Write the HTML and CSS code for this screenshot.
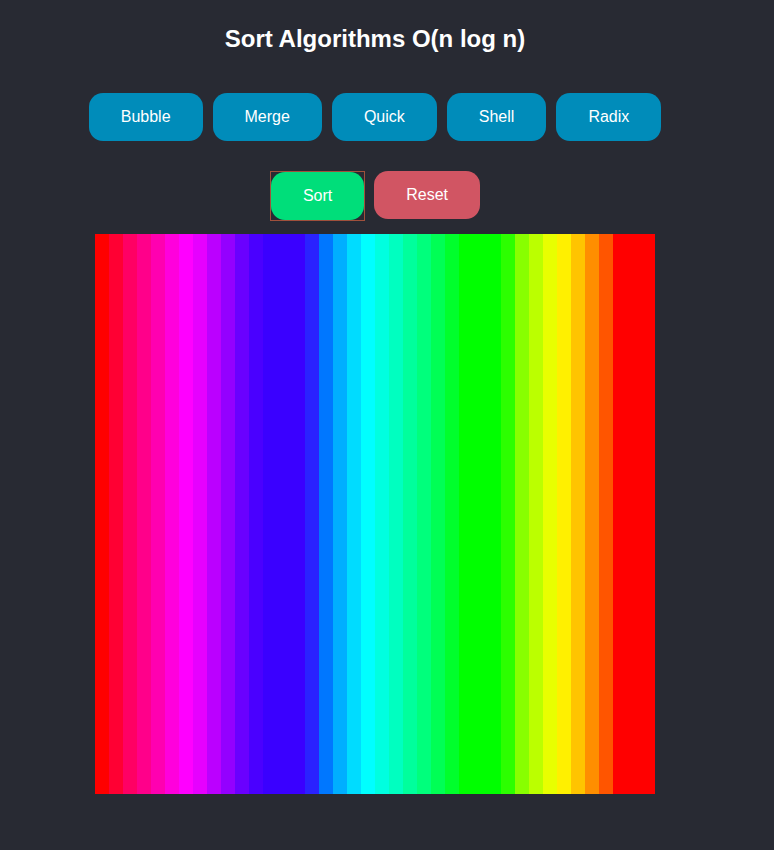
FILE: index.html
```html
<!DOCTYPE html>
<html>
<head>
<meta charset="utf-8">
<link rel="stylesheet" href="styles.css">
</head>
<body>
<div class="app">
  <h1 class="title">Sort Algorithms O(n log n)</h1>
  <div class="row algos">
    <button class="btn blue">Bubble</button>
    <button class="btn blue">Merge</button>
    <button class="btn blue">Quick</button>
    <button class="btn blue">Shell</button>
    <button class="btn blue">Radix</button>
  </div>
  <div class="row actions">
    <span class="focus"><button class="btn green">Sort</button></span>
    <button class="btn red">Reset</button>
  </div>
  <div class="canvas">
    <div class="bar" style="background:#ff0000"></div>
    <div class="bar" style="background:#ff0033"></div>
    <div class="bar" style="background:#ff0064"></div>
    <div class="bar" style="background:#ff008a"></div>
    <div class="bar" style="background:#ff00b0"></div>
    <div class="bar" style="background:#ff00dc"></div>
    <div class="bar" style="background:#ff00ff"></div>
    <div class="bar" style="background:#e600ff"></div>
    <div class="bar" style="background:#bb00ff"></div>
    <div class="bar" style="background:#9400ff"></div>
    <div class="bar" style="background:#6a00ff"></div>
    <div class="bar" style="background:#4a00ff"></div>
    <div class="bar" style="background:#3a00ff"></div>
    <div class="bar" style="background:#3a00ff"></div>
    <div class="bar" style="background:#3a00ff"></div>
    <div class="bar" style="background:#2a22ff"></div>
    <div class="bar" style="background:#0077ff"></div>
    <div class="bar" style="background:#00aeff"></div>
    <div class="bar" style="background:#00dcff"></div>
    <div class="bar" style="background:#00ffff"></div>
    <div class="bar" style="background:#00ffe0"></div>
    <div class="bar" style="background:#00ffc0"></div>
    <div class="bar" style="background:#00ff9c"></div>
    <div class="bar" style="background:#00ff7c"></div>
    <div class="bar" style="background:#00ff55"></div>
    <div class="bar" style="background:#00ff2c"></div>
    <div class="bar" style="background:#00ff00"></div>
    <div class="bar" style="background:#00ff00"></div>
    <div class="bar" style="background:#00ff00"></div>
    <div class="bar" style="background:#2cff00"></div>
    <div class="bar" style="background:#88ff00"></div>
    <div class="bar" style="background:#bbff00"></div>
    <div class="bar" style="background:#e8ff00"></div>
    <div class="bar" style="background:#fff000"></div>
    <div class="bar" style="background:#ffc400"></div>
    <div class="bar" style="background:#ff8e00"></div>
    <div class="bar" style="background:#ff5500"></div>
    <div class="bar" style="background:#ff0000"></div>
    <div class="bar" style="background:#ff0000"></div>
    <div class="bar" style="background:#ff0000"></div>
  </div>
</div>
</body>
</html>
```
FILE: styles.css
```css
html, body {
  margin: 0;
  padding: 0;
  background: #282a33;
  font-family: "Liberation Sans", Arial, sans-serif;
}

.app {
  width: 750px;
  display: flex;
  flex-direction: column;
  align-items: center;
  padding-top: 25px;
}

.title {
  margin: 0;
  font-size: 24px;
  line-height: 28px;
  font-weight: bold;
  color: #ffffff;
}

.row {
  display: flex;
  gap: 10px;
  align-items: center;
}

.algos {
  margin-top: 40px;
}

.actions {
  margin-top: 30px;
  gap: 9px;
  align-items: flex-start;
}

.btn {
  border: none;
  border-radius: 14px;
  height: 48px;
  padding: 0 32px;
  font-family: "Liberation Sans", Arial, sans-serif;
  font-size: 16px;
  color: #ffffff;
  cursor: pointer;
}

.blue { background: #008cba; }
.green { background: #00de7a; }
.red { background: #d15563; }

.focus {
  display: flex;
  border: 1px solid #a0503c;
}

.canvas {
  margin-top: 13px;
  width: 560px;
  height: 560px;
  display: flex;
}

.bar {
  flex: 1;
  height: 100%;
}
```
